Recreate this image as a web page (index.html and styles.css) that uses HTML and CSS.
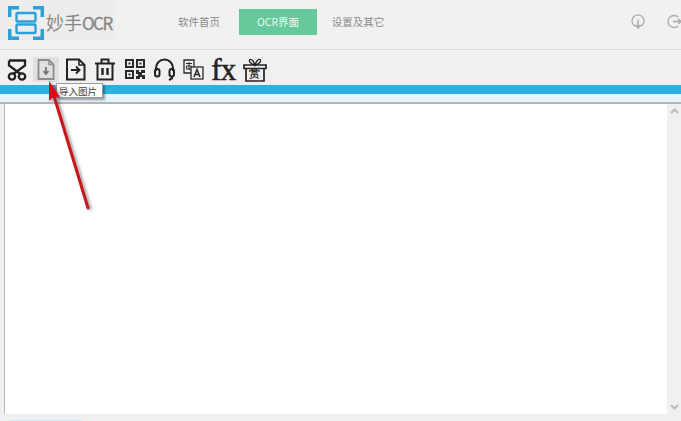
FILE: index.html
```html
<!DOCTYPE html>
<html lang="zh">
<head>
<meta charset="utf-8">
<title>妙手OCR</title>
<link rel="stylesheet" href="styles.css">
</head>
<body>
<div class="app">
  <header class="top">
    <div class="logo">
      <svg class="logo-mark" width="36" height="34" viewBox="0 0 36 34" fill="none" stroke="#2f9fd8" stroke-width="3.500">
        <path d="M1.700 11V1.700H11M25 1.700H34.300V11M1.700 23V32.300H11M25 32.300H34.300V23"/>
        <rect x="8.500" y="7" width="19" height="8.500" rx="1" stroke-width="2.400"/>
        <rect x="8.500" y="18.500" width="19" height="8.500" rx="1" stroke-width="2.400"/>
      </svg>
      <span class="logo-text">妙手<span class="logo-latin">OCR</span></span>
    </div>
    <nav class="tabs">
      <span class="tab">软件首页</span>
      <span class="tab active">OCR界面</span>
      <span class="tab">设置及其它</span>
    </nav>
    <div class="top-icons">
      <svg width="14" height="15" viewBox="0 0 14 15" fill="none" stroke="#aaa" stroke-width="1.300"><path d="M4.500 12.400A6 6 0 1 1 9.500 12.400"/><path d="M7 5.500V13M4.500 11L7 14L9.500 11" stroke-width="1.500"/></svg>
      <svg width="14" height="15" viewBox="0 0 14 15" fill="none" stroke="#aaa" stroke-width="1.300"><path d="M11 3A6 6 0 1 0 11 12"/><path d="M6 7.500H14M11 5L14 7.500L11 10" stroke-width="1.500"/></svg>
    </div>
  </header>
  <div class="tools">
    <button class="tool" aria-label="截图">
      <svg width="20" height="22" viewBox="0 0 20 22" fill="none" stroke="#222" stroke-width="2.300"><path d="M2 1.500H18V6.500L6.500 15M2 1.500V6.500L13.500 15"/><circle cx="5" cy="17.500" r="3.200"/><circle cx="15" cy="17.500" r="3.200"/></svg>
    </button>
    <button class="tool" aria-label="导入图片">
      <span class="hover-box">
        <svg width="18" height="21" viewBox="0 0 18 21" fill="none" stroke="#8c8c8c" stroke-width="1.800"><path d="M1.500 1H12L16.500 5.500V20H1.500Z"/><path d="M12 1V5.500H16.500" stroke-width="1.400"/><path d="M9 8V14.500M6.500 12L9 15L11.500 12" stroke="#777"/></svg>
      </span>
    </button>
    <button class="tool" aria-label="导出">
      <svg width="21" height="23" viewBox="0 0 21 23" fill="none" stroke="#222" stroke-width="2"><path d="M2 1.500H14L19.500 7V21.500H2Z"/><path d="M14 1.500V7H19.500" stroke-width="1.600"/><path d="M6 12H14M11 8.500L14.500 12L11 15.500"/></svg>
    </button>
    <button class="tool" aria-label="清空">
      <svg width="22" height="23" viewBox="0 0 22 23" fill="none" stroke="#222" stroke-width="2"><path d="M1 5.500H21"/><path d="M7.500 5V1.500H14.500V5"/><path d="M3.500 5.500V21.500H18.500V5.500"/><path d="M8.500 10V17M13.500 10V17" stroke-width="2.400"/></svg>
    </button>
    <button class="tool" aria-label="二维码">
      <svg width="20" height="21" viewBox="0 0 20 21" fill="#2a2a2a"><path fill-rule="evenodd" d="M0 0H9V9H0ZM2 2V7H7V2ZM11 0H20V9H11ZM13 2V7H18V2ZM0 11H9V20H0ZM2 13V18H7V13Z"/><rect x="3.500" y="3.500" width="2" height="2"/><rect x="14.500" y="3.500" width="2" height="2"/><rect x="3.500" y="14.500" width="2" height="2"/><path d="M11 11H14V13H16V11H20V14H17V16H20V20H17V18H15V20H11V17H13V15H11Z"/></svg>
    </button>
    <button class="tool" aria-label="朗读">
      <svg width="23" height="23" viewBox="0 0 23 23" fill="none" stroke="#222" stroke-width="2"><path d="M3 13V10A8.500 8.500 0 0 1 20 10V13"/><rect x="2" y="11" width="4.500" height="7.500" rx="2.200"/><rect x="16.500" y="11" width="4.500" height="7.500" rx="2.200"/><path d="M19 18.500V20.500L16 22"/></svg>
    </button>
    <button class="tool" aria-label="翻译">
      <svg width="21" height="21" viewBox="0 0 21 21" fill="none" stroke="#2a2a2a" stroke-width="1.300"><path d="M1 1H11V14H1Z"/><path d="M3 4.500H9M6 3V11M3.500 7H8.500V10H3.500Z" stroke-width="1"/><rect x="8" y="8" width="12" height="12" fill="#f0f0f0"/><path d="M11 18L14 10.500L17 18M12 15.500H16" stroke-width="1.500"/></svg>
    </button>
    <span class="tool fx">fx</span>
    <button class="tool gift" aria-label="打赏">
      <svg width="24" height="24" viewBox="0 0 24 24" fill="none" stroke="#222" stroke-width="1.700"><path d="M1 7H23V10.500H1Z"/><path d="M3 10.500V23H21V10.500"/><path d="M12 7C8 6 5 3 7 1.500C9 .5 11 4 12 7C13 4 15 .5 17 1.500C19 3 16 6 12 7Z" stroke-width="1.300"/></svg>
      <span class="gift-char">赏</span>
    </button>
  </div>
  <div class="blue-bar"></div>
  <div class="cyan-bar"></div>
  <main class="work">
    <div class="editor"></div>
    <div class="scroll">
      <svg width="9" height="6" viewBox="0 0 9 6" fill="none" stroke="#bbb" stroke-width="2"><path d="M1 5L4.500 1.500L8 5"/></svg>
      <svg width="9" height="6" viewBox="0 0 9 6" fill="none" stroke="#bbb" stroke-width="2"><path d="M1 1L4.500 4.500L8 1"/></svg>
    </div>
  </main>
  <footer class="bottom"><div class="progress"></div></footer>

  <div class="tip">导入图片</div>
  <svg class="arrow" width="70" height="135" viewBox="0 0 70 135">
    <defs><filter id="s" x="-30%" y="-30%" width="160%" height="160%"><feDropShadow dx="2" dy="1" stdDeviation="1.500" flood-color="#000" flood-opacity=".4"/></filter></defs>
    <g filter="url(#s)"><path d="M44 128L10 16" stroke="#c8141c" stroke-width="3" stroke-linecap="round"/><path d="M5 1L16 17L10 16.500L5 21Z" fill="#d80f1c"/></g>
  </svg>
</div>
</body>
</html>
```
FILE: styles.css
```css
* { box-sizing: border-box; }
html, body { margin: 0; height: 100%; }
body { overflow: hidden; font-family: "Noto Sans CJK SC", "Liberation Sans", sans-serif; background: #f0f0f0; }
.app { position: relative; width: 681px; height: 421px; display: flex; flex-direction: column; overflow: hidden; }

.top { height: 50px; flex: none; display: flex; align-items: flex-start; border-bottom: 1px solid #dcdcdc; background: #f1f1f1; }
.logo { width: 115px; height: 40px; flex: none; display: flex; align-items: center; gap: 2px; padding: 5px 0 0 8px; background: #ededed; }
.logo-mark { flex: none; }
.logo-text { font-size: 18px; line-height: 24px; color: #868686; white-space: nowrap; }
.logo-latin { font-size: 17px; letter-spacing: -1.500px; -webkit-text-stroke: .3px #868686; }
.tabs { display: flex; margin-left: 44px; margin-top: 9px; }
.tab { height: 26px; line-height: 26px; font-size: 10.500px; color: #8a8a8a; text-align: center; white-space: nowrap; }
.tab:first-child { width: 80px; }
.tab.active { width: 78px; background: #66c99b; color: #eefaf4; }
.tab:last-child { width: 82px; }
.top-icons { margin-left: auto; margin-top: 14px; display: flex; gap: 22px; }

.tools { height: 35px; flex: none; display: flex; align-items: center; padding: 4px 0 0 2px; }
.tool { position: relative; width: 29.500px; height: 25px; padding: 0; border: 0; background: none; display: flex; align-items: center; justify-content: center; flex: none; }
.hover-box { width: 26px; height: 25px; background: #e0e0e0; display: flex; align-items: center; justify-content: center; }
.fx { font-family: "Liberation Serif", serif; font-size: 31px; line-height: 24px; color: #222; letter-spacing: -1px; -webkit-text-stroke: .5px #222; }
.gift { margin-left: 2px; }
.gift-char { position: absolute; left: 9px; top: 10px; font-size: 11px; line-height: 12px; font-weight: 700; color: #333; }

.blue-bar { height: 9px; flex: none; background: #2fb0e0; }
.cyan-bar { height: 10px; flex: none; background: #e4f4f9; border-bottom: 2px solid #b5b5b5; }
.work { flex: 1; display: flex; padding-left: 4px; min-height: 0; }
.editor { flex: 1; background: #fff; border-left: 1px solid #b8b8b8; }
.scroll { width: 14px; flex: none; background: #f0f0f0; display: flex; flex-direction: column; justify-content: space-between; align-items: center; padding: 4px 0; }
.bottom { height: 7px; flex: none; background: #f0f0f0; display: flex; align-items: flex-end; padding-left: 10px; }
.progress { width: 72px; height: 1px; background: #cdeffb; }

.tip { position: absolute; left: 56px; top: 83px; width: 47px; height: 15px; padding-right: 3px; background: #fbfbfb; border: 1px solid #9c9c9c; box-shadow: 2px 2px 2px rgba(0,0,0,.35); font-size: 9.500px; line-height: 14px; color: #444; text-align: center; white-space: nowrap; }
.arrow { position: absolute; left: 44px; top: 80px; }
```
